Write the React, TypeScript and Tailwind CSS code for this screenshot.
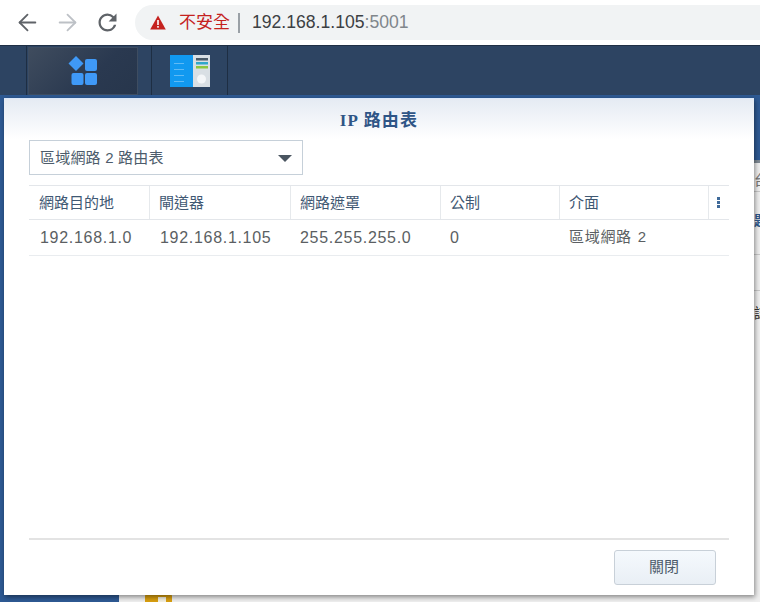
import { ArrowLeft, ArrowRight } from "lucide-react";

const FONT = "font-['Liberation_Sans','Noto_Sans_CJK_TC',sans-serif]";

const COLUMNS = [
  { label: "網路目的地", width: "w-[121px]", head: "pl-[10px]", cell: "pl-[11px]" },
  { label: "閘道器", width: "w-[141px]", head: "pl-[9px]", cell: "pl-[10px]" },
  { label: "網路遮罩", width: "w-[150px]", head: "pl-[9px]", cell: "pl-[9px]" },
  { label: "公制", width: "w-[119px]", head: "pl-[9px]", cell: "pl-[9px]" },
  { label: "介面", width: "w-[149px]", head: "pl-[9px]", cell: "pl-[9px] text-[15px] [word-spacing:1px]" },
];

const ROW = ["192.168.1.0", "192.168.1.105", "255.255.255.0", "0", "區域網路 2"];

function ChromeBar() {
  return (
    <div className="flex h-[45px] items-center bg-white pl-[14px]">
      <ArrowLeft className="h-[27px] w-[27px] text-[#5f6368]" strokeWidth={1.6} />
      <ArrowRight className="ml-[13px] h-[27px] w-[27px] text-[#bdc1c6]" strokeWidth={1.6} />
      <svg className="ml-[13px] h-[27px] w-[27px] text-[#5f6368]" viewBox="0 0 24 24" fill="currentColor">
        <path d="M17.65 6.35A7.958 7.958 0 0 0 12 4c-4.42 0-7.99 3.58-7.99 8s3.57 8 7.99 8c3.73 0 6.84-2.55 7.73-6h-2.08A5.99 5.99 0 0 1 12 18c-3.31 0-6-2.69-6-6s2.69-6 6-6c1.66 0 3.14.69 4.22 1.78L13 11h7V4l-2.35 2.35z" />
      </svg>
      <div className="ml-[14px] flex h-[35px] flex-1 items-center rounded-l-full bg-[#f1f3f4] pl-[15px]">
        <svg width="16" height="15" viewBox="0 0 16 15">
          <path d="M8 0.5 L15.8 14.5 H0.2 Z" fill="#c5221f" />
          <rect x="7.2" y="5" width="1.6" height="5" fill="#fff" />
          <rect x="7.2" y="11" width="1.6" height="1.7" fill="#fff" />
        </svg>
        <span className="ml-[13px] text-[17px] text-[#c5221f]">不安全</span>
        <span className="ml-[8px] h-[20px] w-[2px] bg-[#9aa0a6]" />
        <span className="ml-[12px] text-[17.6px] text-[#3c4043]">
          192.168.1.105<span className="text-[#80868b]">:5001</span>
        </span>
      </div>
    </div>
  );
}

function Taskbar() {
  return (
    <div className="flex h-[50px] items-stretch border-t border-[#1f2f45] bg-[#2d4462] pl-[1px]">
      <div className="w-[26px] border-r border-[#1e2e43]" />
      <div className="ml-[1px] mt-[1px] flex w-[110px] items-center justify-center border border-[#3e4d61] bg-[linear-gradient(135deg,#3f4c5e,#2a3950_60%,#27364c)]">
        <svg width="30" height="30" viewBox="0 0 30 30">
          <path d="M8 0 L15.5 7.5 L8 15 L0.5 7.5 Z" fill="#3f99f7" />
          <rect x="17" y="3" width="12" height="12" rx="2" fill="#3f99f7" />
          <rect x="3.5" y="17" width="12" height="12" rx="2" fill="#3f99f7" />
          <rect x="17" y="17" width="12" height="12" rx="2" fill="#3f99f7" />
        </svg>
      </div>
      <div className="ml-[13px] flex w-[77px] items-center justify-center border-x border-[#1e2e43]">
        <svg width="40" height="32" viewBox="0 0 40 32">
          <rect width="23" height="32" fill="#1199f0" />
          <rect x="23" width="17" height="32" fill="#d9dfe4" />
          <rect x="26" y="3" width="12" height="2.5" fill="#4a5a68" />
          <rect x="26" y="7" width="12" height="2.5" fill="#2fa7c9" />
          <rect x="26" y="11" width="12" height="2.5" fill="#8cc63f" />
          <circle cx="31.5" cy="24" r="4.5" fill="#f4f6f8" />
          <rect x="4" y="8" width="10" height="1" fill="#5fbaf5" />
          <rect x="4" y="14" width="10" height="1" fill="#5fbaf5" />
          <rect x="4" y="20" width="10" height="1" fill="#5fbaf5" />
          <rect x="4" y="26" width="10" height="1" fill="#5fbaf5" />
        </svg>
      </div>
    </div>
  );
}

// the window behind the dialog, only its edges show
function BackWindow() {
  return (
    <div className="absolute bottom-0 left-[119px] right-0 top-[65px] border-t-[3px] border-[#7f8a94] bg-[#efefef] text-[14px] text-[#777]">
      <div className="absolute right-0 top-[7px] h-[22px] w-[6px] overflow-hidden border-b border-[#c8c8c8]">台</div>
      <div className="absolute right-0 top-[47px] h-[24px] w-[6px] overflow-hidden font-bold text-[#2f5a8e]">題</div>
      <div className="absolute right-0 top-[91px] h-[1px] w-[6px] bg-[#c8c8c8]" />
      <div className="absolute right-0 top-[127px] h-[1px] w-[6px] bg-[#c8c8c8]" />
      <div className="absolute right-0 top-[140px] h-[24px] w-[6px] overflow-hidden text-[#333]">誌</div>
      <div className="absolute left-[26px] top-[431px] h-[12px] w-[27px] rounded-t-[2px] bg-[#d99f10]">
        <div className="ml-[13px] mt-[3px] h-[9px] w-[8px] bg-[#f4f0e0]" />
      </div>
    </div>
  );
}

function RouteDialog() {
  return (
    <div className="absolute left-[4px] top-[3px] flex h-[497px] w-[750px] flex-col border-t border-[#dbe8fb] bg-white bg-[linear-gradient(#e5ebf3,#ffffff_40px)] px-[25px] shadow-[1px_2px_5px_rgba(0,0,0,0.45)]">
      <div className="flex h-[41px] items-end justify-center pb-[7px] font-bold text-[#2f5586]">
        <span className="font-['Liberation_Serif','Noto_Sans_CJK_TC',serif] text-[17px] tracking-[1.2px]">IP 路由表</span>
      </div>
      <div className="flex h-[35px] w-[274px] items-center justify-between border border-[#c6d0d9] bg-white pl-[10px] pr-[10px] pt-[1px] text-[15px] tracking-[0.2px] text-[#4d5c6b]">
        <span>區域網路 2 路由表</span>
        <span className="h-0 w-0 border-x-[7px] border-t-[7px] border-x-transparent border-t-[#4a5560]" />
      </div>
      <div className="mt-[10px] w-[700px] text-[15px]">
        <div className="flex h-[35px] border-y border-[#e3e6ea] text-[#3f5873]">
          {COLUMNS.map((col) => (
            <div key={col.label} className={`${col.width} ${col.head} flex items-center border-r border-[#e6e9ec] pt-[1px]`}>
              {col.label}
            </div>
          ))}
          <div className="flex flex-1 items-center justify-center pr-[2px]">
            <span className="flex flex-col gap-[1px]">
              <span className="h-[3px] w-[3px] bg-[#3f6a99]" />
              <span className="h-[3px] w-[3px] bg-[#3f6a99]" />
              <span className="h-[3px] w-[3px] bg-[#3f6a99]" />
            </span>
          </div>
        </div>
        <div className="flex h-[36px] border-b border-[#e9ecef] text-[16px] tracking-[0.7px] text-[#5b5f63]">
          {ROW.map((value, i) => (
            <div key={value} className={`${COLUMNS[i].width} ${COLUMNS[i].cell} flex items-center`}>
              {value}
            </div>
          ))}
        </div>
      </div>
      <div className="flex-1" />
      <div className="flex h-[57px] justify-end border-t-2 border-[#e3e3e3] pr-[13px] pt-[10px]">
        <button className="h-[35px] w-[102px] rounded-[3px] border border-[#c8d0d8] bg-[linear-gradient(#f5f9fd,#e9eff5)] pr-[2px] text-[15px] text-[#4d5c6b]">
          關閉
        </button>
      </div>
    </div>
  );
}

export default function App() {
  return (
    <div className={`${FONT} flex h-[602px] w-[760px] flex-col overflow-hidden bg-[#2e5a94]`}>
      <ChromeBar />
      <Taskbar />
      <div className="relative flex-1">
        <BackWindow />
        <RouteDialog />
      </div>
    </div>
  );
}
